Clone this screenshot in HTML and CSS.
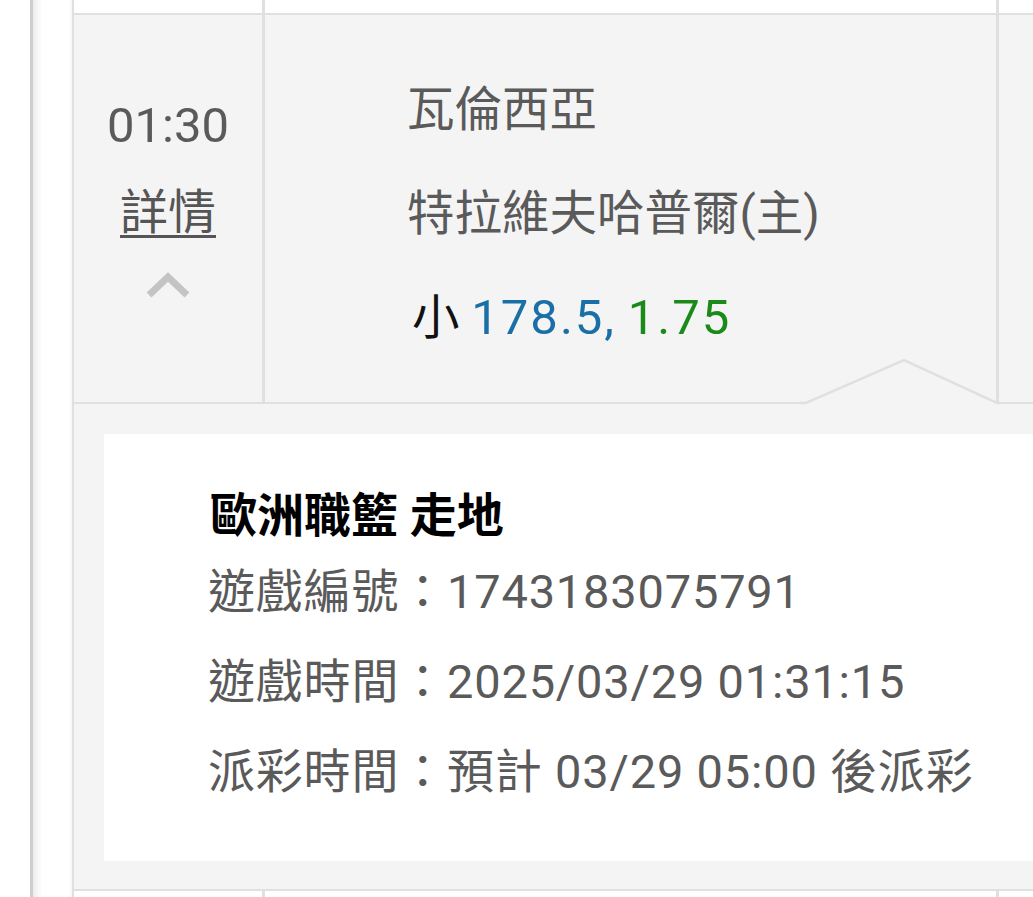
FILE: index.html
```html
<!DOCTYPE html>
<html lang="zh-Hant">
<head>
  <meta charset="UTF-8" />
  <meta name="viewport" content="width=device-width, initial-scale=1.0" />
  <title>注單詳情</title>
  <link rel="stylesheet" href="styles.css">
</head>
<body>
  <div class="frame">
    <div class="table">
      <div class="row row-top">
        <div class="cell time"></div>
        <div class="cell teams"></div>
        <div class="cell extra"></div>
      </div>

      <div class="row match">
        <div class="cell time">
          <div class="clock">01:30</div>
          <a href="#" class="detail-link">詳情</a>
          <svg class="chevron" width="44" height="26" viewBox="0 0 44 26">
            <polyline points="3,23 22,5 41,23" fill="none" stroke="#c4c4c4" stroke-width="7" />
          </svg>
        </div>
        <div class="cell teams">
          <div class="team">瓦倫西亞</div>
          <div class="team">特拉維夫哈普爾(主)</div>
          <div class="bet">
            <span class="pick">小</span>
            <span class="line">178.5,</span>
            <span class="odds">1.75</span>
          </div>
        </div>
        <div class="cell extra"></div>
        <svg class="notch" width="201" height="49" viewBox="0 0 201 49">
          <polygon points="0,49 6,47 104,4 197,47 201,49" fill="#f4f4f4" />
          <polyline points="0,47 6,47 104,4 197,47 201,47" fill="none" stroke="#e0e0e0" stroke-width="2.5" />
        </svg>
      </div>

      <div class="details">
        <div class="details-card">
          <div class="details-title">歐洲職籃 走地</div>
          <div class="details-row">遊戲編號：1743183075791</div>
          <div class="details-row">遊戲時間：2025/03/29 01:31:15</div>
          <div class="details-row">派彩時間：預計 03/29 05:00 後派彩</div>
        </div>
      </div>

      <div class="row row-next">
        <div class="cell time"></div>
        <div class="cell teams"></div>
        <div class="cell extra"></div>
      </div>
    </div>
  </div>
</body>
</html>
```

FILE: styles.css
```css
:root {
  --line: #e0e0e0;
  --panel: #f4f4f4;
  --text: #5a5a5a;
}

body {
  margin: 0;
  padding: 0;
  background-color: #fff;
  font-family: Roboto, "Noto Sans CJK TC", sans-serif;
  font-size: 48px;
  color: var(--text);
  overflow: hidden;
  height: 897px;
}

.frame {
  margin-left: 30px;
  padding-left: 39px;
  border-left: 3px solid #cfcfcf;
  background: linear-gradient(to right, #ececec, #fff 9px, #fff 36px, #f4f4f4 39px);
  height: 897px;
}

.table {
  border-left: 2px solid var(--line);
  width: 1100px;
}

.row {
  display: grid;
  grid-template-columns: 191px 734px 1fr;
}

.cell.time {
  border-right: 3px solid var(--line);
}

.cell.teams {
  border-right: 3px solid var(--line);
}

.row-top {
  height: 13px;
  background-color: #fff;
  border-bottom: 2px solid var(--line);
}

.match {
  position: relative;
  height: 387px;
  background-color: var(--panel);
  border-bottom: 2px solid var(--line);
}

.match .time {
  display: flex;
  flex-direction: column;
  align-items: center;
  padding-top: 81px;
}

.clock {
  line-height: 60px;
  font-size: 49px;
}

.detail-link {
  margin-top: 27px;
  line-height: 60px;
  color: #555;
  text-decoration: underline;
  text-decoration-thickness: 3px;
  text-underline-offset: 6px;
}

.chevron {
  margin-top: 29px;
  display: block;
}

.match .teams {
  padding-top: 43px;
  padding-left: 142px;
  font-size: 47.5px;
}

.team,
.bet {
  line-height: 104px;
  white-space: nowrap;
}

.bet .pick {
  color: #111;
  margin-left: 5px;
}

.bet .line,
.bet .odds {
  font-size: 49px;
  letter-spacing: 2px;
}

.bet .line {
  color: #1a6fa6;
}

.bet .odds {
  color: #1b8a1b;
}

.notch {
  position: absolute;
  left: 726px;
  top: 341px;
}

.details {
  background-color: var(--panel);
  padding: 30px 0 28px 30px;
  border-bottom: 2px solid var(--line);
}

.details-card {
  background-color: #fff;
  padding: 51px 0 44px 104px;
}

.details-title {
  line-height: 62px;
  color: #000;
  font-weight: 700;
  font-size: 47px;
  padding-left: 2px;
}

.details-row {
  line-height: 90px;
  font-size: 47px;
  letter-spacing: 0.8px;
  white-space: nowrap;
}

.row-next {
  height: 20px;
  background-color: #fff;
}
```
